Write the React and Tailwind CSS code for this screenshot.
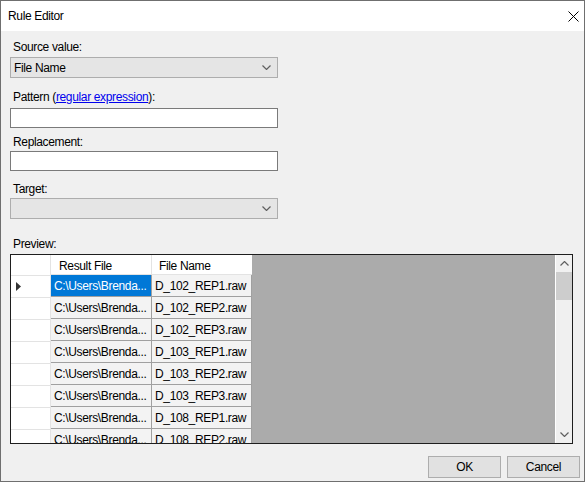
import { useState } from 'react'

const ROWS = [
  'D_102_REP1.raw',
  'D_102_REP2.raw',
  'D_102_REP3.raw',
  'D_103_REP1.raw',
  'D_103_REP2.raw',
  'D_103_REP3.raw',
  'D_108_REP1.raw',
  'D_108_REP2.raw',
]

function Chevron({ up = false, className = '' }) {
  return (
    <svg width="9" height="5" viewBox="0 0 9 5" className={className}>
      <path
        d={up ? 'M0.5 4.5 L4.5 0.5 L8.5 4.5' : 'M0.5 0.5 L4.5 4.5 L8.5 0.5'}
        fill="none"
        stroke="#606060"
        strokeWidth="1.2"
      />
    </svg>
  )
}

function Combo({ value, disabled }) {
  return (
    <div className="flex h-[21px] w-[268px] items-center justify-between border border-[#adadad] bg-[#e5e5e5] pl-[3px] pr-[6px]">
      <span className={disabled ? 'text-[#6d6d6d]' : 'text-black'}>{value}</span>
      <Chevron />
    </div>
  )
}

export default function App() {
  const [selected] = useState(0)

  return (
    <div
      className="flex h-[482px] w-[585px] flex-col border border-[#6f6f6f] bg-[#f0f0f0] text-[12px] leading-[14px] tracking-[-0.35px] text-black"
      style={{ fontFamily: '"Liberation Sans", Arial, sans-serif' }}
    >
      {/* Title bar */}
      <div className="flex h-[30px] shrink-0 items-center justify-between bg-white pl-[7px] pr-[4px]">
        <span className="text-[12px]">Rule Editor</span>
        <svg width="11" height="11" viewBox="0 0 11 11" className="mr-[1px]">
          <path d="M0.5 0.5 L10.5 10.5 M10.5 0.5 L0.5 10.5" stroke="#000" strokeWidth="1" />
        </svg>
      </div>

      {/* Body */}
      <div className="flex flex-1 flex-col pl-[9px] pr-[12px]">
        <label className="mt-[9px] h-[14px] pl-[3px]">Source value:</label>
        <div className="mt-[3px]">
          <Combo value="File Name" />
        </div>

        <label className="mt-[12px] h-[14px] pl-[3px]">
          Pattern (<span className="text-[#0000ee] underline">regular expression</span>):
        </label>
        <div className="mt-[4px] h-[20px] w-[268px] border border-[#7a7a7a] bg-white" />

        <label className="mt-[7px] h-[14px] pl-[3px]">Replacement:</label>
        <div className="mt-[2px] h-[20px] w-[268px] border border-[#7a7a7a] bg-white" />

        <label className="mt-[11px] h-[14px] pl-[3px]">Target:</label>
        <div className="mt-[2px]">
          <Combo value="" disabled />
        </div>

        <label className="mt-[18px] h-[14px] pl-[3px]">Preview:</label>

        {/* Grid */}
        <div className="mt-[3px] flex h-[190px] w-[563px] border border-[#1e1e1e] bg-[#ababab]">
          <div className="flex-1 overflow-hidden">
            <div className="flex h-[20px]">
              <div className="w-[40px] border-r border-[#e3e3e3] bg-white" />
              <div className="w-[101px] border-b border-r border-[#e3e3e3] bg-white pl-[8px] pt-[1px] leading-[20px]">Result File</div>
              <div className="w-[100px] border-b border-[#e3e3e3] bg-white pl-[7px] pt-[1px] leading-[20px]">File Name</div>
            </div>
            {ROWS.map((name, i) => (
              <div key={name} className="flex h-[22px]">
                <div className="flex w-[40px] items-center border-t border-r border-[#e3e3e3] bg-white pl-[5px]">
                  {i === selected && (
                    <svg width="5" height="9" viewBox="0 0 5 9">
                      <path d="M0 0 L5 4.5 L0 9 Z" fill="#333" />
                    </svg>
                  )}
                </div>
                <div
                  className={
                    'w-[101px] overflow-hidden whitespace-nowrap border-b border-r border-[#a0a0a0] pl-[3px] pt-[1px] leading-[20px] ' +
                    (i === selected ? 'bg-[#0078d7] text-white' : 'bg-[#f3f3f3]')
                  }
                >
                  C:\Users\Brenda...
                </div>
                <div className="w-[100px] overflow-hidden whitespace-nowrap border-b border-r border-[#a0a0a0] bg-[#f3f3f3] pl-[3px] pt-[1px] leading-[20px]">
                  {name}
                </div>
              </div>
            ))}
          </div>

          {/* Scrollbar */}
          <div className="flex w-[17px] flex-col border-l border-white bg-[#f0f0f0]">
            <div className="flex h-[17px] items-center justify-center">
              <Chevron up />
            </div>
            <div className="h-[28px] bg-[#cdcdcd]" />
            <div className="flex-1" />
            <div className="flex h-[17px] items-center justify-center">
              <Chevron />
            </div>
          </div>
        </div>

        {/* Buttons */}
        <div className="mt-[12px] flex justify-end gap-[6px]">
          <button className="h-[22px] w-[73px] border border-[#adadad] bg-[#e1e1e1]">OK</button>
          <button className="mr-[-8px] h-[22px] w-[73px] border border-[#adadad] bg-[#e1e1e1]">Cancel</button>
        </div>
      </div>
    </div>
  )
}
